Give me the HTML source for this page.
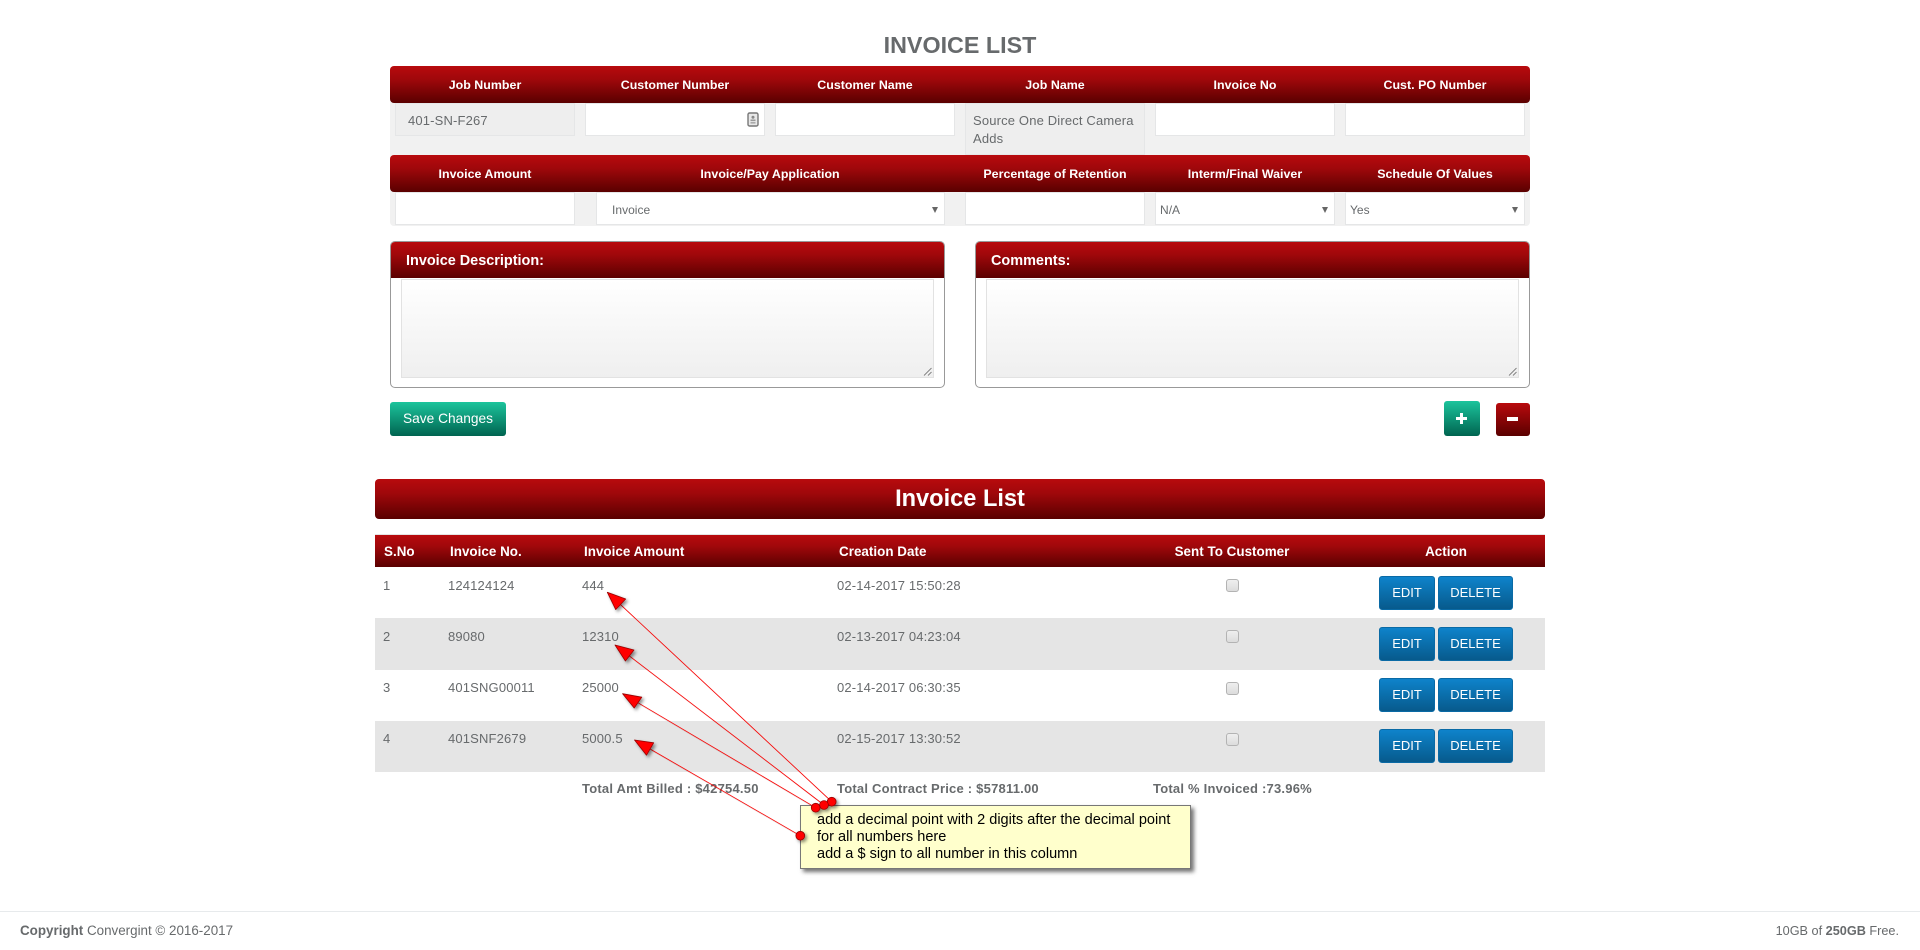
<!DOCTYPE html>
<html lang="en">
<head>
<meta charset="utf-8">
<title>Invoice List</title>
<style>
html,body{margin:0;padding:0;background:#fff;width:1920px;height:950px;overflow:hidden}
body{position:relative;font-family:"Liberation Sans",Arial,sans-serif;color:#676a6c;font-size:13px;letter-spacing:.16px}
.a{position:absolute}
.red{background:linear-gradient(to bottom,#b80a0d 0%,#a0080b 35%,#5a0000 100%)}
.bar{position:absolute;left:390px;width:1140px;height:37px;border-radius:4px}
.lbl{position:absolute;width:190px;text-align:center;color:#fff;font-weight:bold;font-size:12.4px;letter-spacing:.03px;line-height:16px;white-space:nowrap}
.inp{position:absolute;width:178px;height:31px;background:#fff;border:1px solid #e5e6e7}
.ro{background:#eee}
.t{position:absolute;line-height:18px;white-space:nowrap}
.panel{position:absolute;top:241px;height:145px;background:#fff;border:1px solid #999;border-radius:5px;box-sizing:content-box}
.phead{position:absolute;left:0;right:0;top:0;height:36px;border-radius:4px 4px 0 0}
.ptitle{position:absolute;left:15px;top:10px;color:#fff;font-weight:bold;font-size:14.45px;letter-spacing:0;line-height:18px}
.ta{position:absolute;top:37px;height:97px;background:linear-gradient(to bottom,#fff,#efefef);border:1px solid #e2e2e2}
.grip{position:absolute;right:1px;bottom:1px}
.arr{position:absolute;width:0;height:0;border-left:3px solid transparent;border-right:3px solid transparent;border-top:6px solid #666;top:207px}
.th{position:absolute;top:543px;color:#fff;font-weight:bold;font-size:13.4px;letter-spacing:.03px;line-height:18px;white-space:nowrap}
.stripe{position:absolute;left:375px;width:1170px;background:#e5e5e5}
.cb{position:absolute;left:1226px;width:11px;height:11px;background:linear-gradient(to bottom,#efefef,#dcdcdc);border:1px solid #b3b3b3;border-radius:3px}
.btn{position:absolute;height:32px;line-height:32px;text-align:center;color:#fff;font-size:13px;letter-spacing:0;background:linear-gradient(to bottom,#0e83cb,#075a8c);border:1px solid #0a6aa5;border-radius:3px}
.b{font-weight:bold}
.tot{letter-spacing:.22px}
.sel{font-size:12px;letter-spacing:.03px}
</style>
</head>
<body>

<div class="a" style="left:0;width:1920px;top:32px;text-align:center;font-weight:bold;font-size:23.3px;letter-spacing:0;line-height:26px">INVOICE LIST</div>

<!-- form block -->
<div class="a" style="left:390px;top:66px;width:1140px;height:160px;background:#f1f1f1;border-radius:4px"></div>
<div class="bar red" style="top:66px"></div>
<div class="lbl" style="left:390px;top:77px">Job Number</div>
<div class="lbl" style="left:580px;top:77px">Customer Number</div>
<div class="lbl" style="left:770px;top:77px">Customer Name</div>
<div class="lbl" style="left:960px;top:77px">Job Name</div>
<div class="lbl" style="left:1150px;top:77px">Invoice No</div>
<div class="lbl" style="left:1340px;top:77px">Cust. PO Number</div>

<div class="inp ro" style="left:395px;top:103px"></div>
<div class="t" style="left:408px;top:112px">401-SN-F267</div>
<div class="inp" style="left:585px;top:103px"></div>
<svg class="a" style="left:747px;top:112px" width="12" height="15" viewBox="0 0 12 15"><rect x="1" y="1" width="10" height="13" rx="1.5" fill="#e8e8e8" stroke="#777" stroke-width="1.4"/><circle cx="6" cy="5.2" r="1.5" fill="#888"/><rect x="3.5" y="7.5" width="5" height="1.6" fill="#999"/><rect x="3.5" y="10" width="5" height="1.6" fill="#aaa"/></svg>
<div class="inp" style="left:775px;top:103px"></div>
<div class="inp ro" style="left:965px;top:103px;height:50px"></div>
<div class="t" style="left:973px;top:112px">Source One Direct Camera<br>Adds</div>
<div class="inp" style="left:1155px;top:103px"></div>
<div class="inp" style="left:1345px;top:103px"></div>

<div class="bar red" style="top:155px"></div>
<div class="lbl" style="left:390px;top:166px">Invoice Amount</div>
<div class="lbl" style="left:675px;top:166px">Invoice/Pay Application</div>
<div class="lbl" style="left:960px;top:166px">Percentage of Retention</div>
<div class="lbl" style="left:1150px;top:166px">Interm/Final Waiver</div>
<div class="lbl" style="left:1340px;top:166px">Schedule Of Values</div>

<div class="inp" style="left:395px;top:192px"></div>
<div class="inp" style="left:596px;top:192px;width:347px"></div>
<div class="t sel" style="left:612px;top:201px">Invoice</div>
<div class="arr" style="left:932px"></div>
<div class="inp" style="left:965px;top:192px"></div>
<div class="inp" style="left:1155px;top:192px"></div>
<div class="t sel" style="left:1160px;top:201px">N/A</div>
<div class="arr" style="left:1322px"></div>
<div class="inp" style="left:1345px;top:192px"></div>
<div class="t sel" style="left:1350px;top:201px">Yes</div>
<div class="arr" style="left:1512px"></div>

<!-- panels -->
<div class="panel" style="left:390px;width:553px">
  <div class="phead red"><div class="ptitle">Invoice Description:</div></div>
  <div class="ta" style="left:10px;width:531px">
    <svg class="grip" width="9" height="9" viewBox="0 0 9 9"><path d="M1 8.5 8.5 1M5 8.5 8.5 5" stroke="#666" stroke-width=".8" fill="none"/></svg>
  </div>
</div>
<div class="panel" style="left:975px;width:553px">
  <div class="phead red"><div class="ptitle">Comments:</div></div>
  <div class="ta" style="left:10px;width:531px">
    <svg class="grip" width="9" height="9" viewBox="0 0 9 9"><path d="M1 8.5 8.5 1M5 8.5 8.5 5" stroke="#666" stroke-width=".8" fill="none"/></svg>
  </div>
</div>

<div class="a" style="left:390px;top:402px;width:116px;height:34px;line-height:33px;text-align:center;color:#fff;font-size:13.7px;letter-spacing:.02px;border-radius:3px;background:linear-gradient(to bottom,#1cc49c,#006450)">Save Changes</div>
<div class="a" style="left:1444px;top:401px;width:36px;height:35px;border-radius:3px;background:linear-gradient(to bottom,#1cc49c,#006450)">
  <svg class="a" style="left:12px;top:12px" width="11" height="11" viewBox="0 0 11 11"><path d="M4 0h3v4h4v3H7v4H4V7H0V4h4z" fill="#fff"/></svg>
</div>
<div class="a" style="left:1496px;top:403px;width:34px;height:33px;border-radius:3px;background:linear-gradient(to bottom,#b80a0d,#5a0000)">
  <div class="a" style="left:11px;top:14px;width:11px;height:4px;background:#fff"></div>
</div>

<!-- list -->
<div class="a red" style="left:375px;top:479px;width:1170px;height:40px;border-radius:4px;color:#fff;text-align:center;font-weight:bold;font-size:23.6px;letter-spacing:0;line-height:41px">Invoice List</div>
<div class="a" style="left:375px;top:534px;width:1170px;height:1px;background:#e4e4e4"></div>
<div class="a red" style="left:375px;top:535px;width:1170px;height:32px"></div>
<div class="th" style="left:384px">S.No</div>
<div class="th" style="left:450px">Invoice No.</div>
<div class="th" style="left:584px">Invoice Amount</div>
<div class="th" style="left:839px">Creation Date</div>
<div class="th" style="left:1132px;width:200px;text-align:center">Sent To Customer</div>
<div class="th" style="left:1346px;width:200px;text-align:center">Action</div>

<div class="stripe" style="top:618px;height:52px"></div>
<div class="stripe" style="top:721px;height:51px"></div>

<div class="t" style="left:383px;top:577px">1</div><div class="t" style="left:448px;top:577px">124124124</div><div class="t" style="left:582px;top:577px">444</div><div class="t" style="left:837px;top:577px">02-14-2017 15:50:28</div>
<div class="t" style="left:383px;top:628px">2</div><div class="t" style="left:448px;top:628px">89080</div><div class="t" style="left:582px;top:628px">12310</div><div class="t" style="left:837px;top:628px">02-13-2017 04:23:04</div>
<div class="t" style="left:383px;top:679px">3</div><div class="t" style="left:448px;top:679px">401SNG00011</div><div class="t" style="left:582px;top:679px">25000</div><div class="t" style="left:837px;top:679px">02-14-2017 06:30:35</div>
<div class="t" style="left:383px;top:730px">4</div><div class="t" style="left:448px;top:730px">401SNF2679</div><div class="t" style="left:582px;top:730px">5000.5</div><div class="t" style="left:837px;top:730px">02-15-2017 13:30:52</div>

<div class="cb" style="top:579px"></div>
<div class="cb" style="top:630px"></div>
<div class="cb" style="top:682px"></div>
<div class="cb" style="top:733px"></div>

<div class="btn" style="left:1379px;top:576px;width:54px">EDIT</div><div class="btn" style="left:1438px;top:576px;width:73px">DELETE</div>
<div class="btn" style="left:1379px;top:627px;width:54px">EDIT</div><div class="btn" style="left:1438px;top:627px;width:73px">DELETE</div>
<div class="btn" style="left:1379px;top:678px;width:54px">EDIT</div><div class="btn" style="left:1438px;top:678px;width:73px">DELETE</div>
<div class="btn" style="left:1379px;top:729px;width:54px">EDIT</div><div class="btn" style="left:1438px;top:729px;width:73px">DELETE</div>

<div class="t b tot" style="left:582px;top:780px">Total Amt Billed : $42754.50</div>
<div class="t b tot" style="left:837px;top:780px">Total Contract Price : $57811.00</div>
<div class="t b tot" style="left:1153px;top:780px">Total % Invoiced :73.96%</div>

<!-- annotation -->
<div class="a" style="left:800px;top:805px;width:389px;height:62px;background:#ffffcc;border:1px solid #777;box-shadow:3px 3px 4px rgba(0,0,0,.55)"></div>
<div class="a" style="left:817px;top:812px;color:#000;font-size:14.55px;letter-spacing:0;line-height:17px;white-space:nowrap">add a decimal point with 2 digits after the decimal point<br>for all numbers here<br>add a $ sign to all number in this column</div>

<svg class="a" style="left:0;top:0" width="1920" height="950" viewBox="0 0 1920 950">
  <defs><filter id="s" x="-20%" y="-20%" width="140%" height="140%"><feDropShadow dx="2" dy="2" stdDeviation="1.5" flood-color="#000" flood-opacity=".45"/></filter></defs>
  <g stroke="#000" stroke-opacity=".12" stroke-width="1" fill="none" transform="translate(1.5 1.5)">
    <path d="M620.5 604.6 831.7 801.7"/>
    <path d="M629.3 655.9 824 805"/>
    <path d="M638.1 702.8 815.7 807.7"/>
    <path d="M650.1 749 800.3 835.7"/>
  </g>
  <g stroke="#f00" stroke-width=".8" fill="none">
    <path d="M620.5 604.6 831.7 801.7"/>
    <path d="M629.3 655.9 824 805"/>
    <path d="M638.1 702.8 815.7 807.7"/>
    <path d="M650.1 749 800.3 835.7"/>
  </g>
  <g filter="url(#s)" fill="#f00" stroke="#900" stroke-width=".8" stroke-linejoin="round">
    <path d="M607.3 592.3 625.7 599 615.7 609.6Z"/>
    <path d="M615 645 634 650 625.4 661Z"/>
    <path d="M622.6 693.7 641.8 697.2 634.2 708Z"/>
    <path d="M634.5 740 653.7 742.8 646.5 755.2Z"/>
    <circle cx="831.7" cy="801.7" r="4.4"/>
    <circle cx="824" cy="805" r="4.4"/>
    <circle cx="815.7" cy="807.7" r="4.4"/>
    <circle cx="800.3" cy="835.7" r="4.4"/>
  </g>
</svg>

<!-- footer -->
<div class="a" style="left:0;top:911px;width:1920px;height:1px;background:#e7eaec"></div>
<div class="t" style="left:20px;top:922px;font-size:13.4px;letter-spacing:0"><span class="b">Copyright</span> Convergint © 2016-2017</div>
<div class="t" style="right:21px;top:922px;font-size:12.7px;letter-spacing:0">10GB of <span class="b">250GB</span> Free.</div>

</body>
</html>
